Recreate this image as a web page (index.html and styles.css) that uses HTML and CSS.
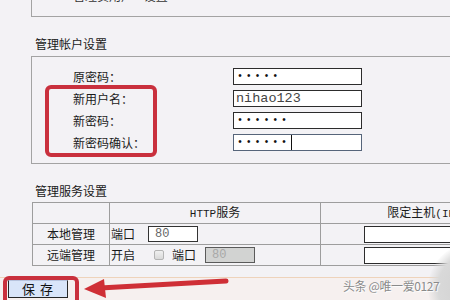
FILE: index.html
```html
<!DOCTYPE html>
<html lang="zh-CN">
<head>
<meta charset="utf-8">
<title>管理帐户设置</title>
<link rel="stylesheet" href="styles.css">
</head>
<body>
<div class="page">
  <div class="top-box"><div class="top-label">管理员用户 &nbsp; &nbsp;设置</div></div>

  <h2 class="section-title">管理帐户设置</h2>
  <div class="account-box">
    <div class="form-grid">
      <span class="label">原密码：</span><span class="field"><span class="dots">•••••</span></span>
      <span class="label">新用户名：</span><span class="field"><span class="plain">nihao123</span></span>
      <span class="label">新密码：</span><span class="field"><span class="dots">••••••</span></span>
      <span class="label">新密码确认：</span><span class="field focused"><span class="dots caret">••••••</span></span>
    </div>
  </div>

  <h2 class="section-title second">管理服务设置</h2>
  <table class="svc">
    <colgroup><col class="c1"><col class="c2"><col class="c3"></colgroup>
    <tr class="head"><td></td><td class="center"><span class="latin">HTTP</span>服务</td><td class="center">限定主机<span class="latin">(IP</span>地址<span class="latin">)</span></td></tr>
    <tr><td class="center">本地管理</td><td><div class="cell"><span>端口</span><span class="small-field port1">80</span></div></td><td><div class="cell"><span class="wide-field"></span></div></td></tr>
    <tr><td class="center">远端管理</td><td><div class="cell"><span>开启</span><span class="check"></span><span class="lbl2">端口</span><span class="small-field disabled">80</span></div></td><td><div class="cell"><span class="wide-field"></span></div></td></tr>
  </table>

  <div class="footer">
    <button class="save">保 存</button>
  </div>
</div>

<div class="mark mark-account"></div>
<div class="mark mark-save"></div>
<svg class="arrow" width="450" height="300" viewBox="0 0 450 300">
  <line x1="226" y1="281" x2="100" y2="288" stroke="#cf2f36" stroke-width="5" stroke-linecap="round"/>
  <polygon points="84,289 104,279 106,298" fill="#cf2f36"/>
</svg>
<div class="blob"></div>
<div class="watermark">头条 @唯一爱0127</div>
</body>
</html>
```

FILE: styles.css
```css
html, body {
  margin: 0;
  padding: 0;
}
body {
  width: 450px;
  height: 300px;
  overflow: hidden;
  position: relative;
  background: #f3f2f5;
  font-family: "Noto Sans CJK SC", "Liberation Sans", sans-serif;
  font-size: 12px;
  color: #1a1a1a;
}
.page {
  width: 600px;
}
.top-box {
  margin-left: 31px;
  height: 17px;
  box-sizing: border-box;
  border-left: 1px solid #a3a3a3;
  border-bottom: 1px solid #a3a3a3;
  overflow: hidden;
}
.top-label {
  margin-top: -11px;
  padding-left: 41px;
  line-height: 14px;
  color: #333;
}
.section-title {
  margin: 19px 0 4px 35px;
  font-size: 12px;
  font-weight: normal;
  line-height: 16px;
}
.section-title.second {
  margin-top: 19px;
  margin-bottom: 3px;
}
.account-box {
  margin-left: 31px;
  border-top: 1px solid #a3a3a3;
  border-left: 1px solid #a3a3a3;
  border-bottom: 1px solid #a3a3a3;
  padding: 11px 0 12px 41px;
}
.form-grid {
  display: grid;
  grid-template-columns: 160px 129px;
  row-gap: 5px;
  align-items: center;
}
.label {
  line-height: 17px;
}
.field {
  height: 17px;
  box-sizing: border-box;
  border: 1px solid #2c2c2c;
  background: #fff;
  display: flex;
  align-items: center;
  padding-left: 3px;
}
.field.focused {
  border-color: #56657a;
}
.dots {
  font-family: "Liberation Mono", monospace;
  font-size: 10px;
  letter-spacing: 2.8px;
  color: #111;
  line-height: 15px;
}
.dots.caret {
  border-right: 1px solid #111;
  padding-right: 1px;
}
.plain {
  font-family: "Liberation Mono", monospace;
  font-size: 13.5px;
  color: #444;
  line-height: 15px;
  margin-left: -1px;
}
.svc {
  margin-left: 32px;
  border-collapse: collapse;
  table-layout: fixed;
  width: 520px;
}
.svc col.c1 { width: 77px; }
.svc col.c2 { width: 211px; }
.svc col.c3 { width: 232px; }
.svc td {
  border: 1px solid #9d9d9d;
  height: 20px;
  padding: 0;
  font-size: 12px;
  line-height: 16px;
}
.latin {
  font-family: "Liberation Mono", monospace;
  font-size: 11px;
}
.center {
  text-align: center;
}
.cell {
  display: flex;
  align-items: center;
  padding-left: 1px;
}
.small-field {
  width: 50px;
  height: 16px;
  box-sizing: border-box;
  border: 1px solid #333;
  background: #fff;
  font-family: "Liberation Mono", monospace;
  font-size: 12px;
  line-height: 14px;
  padding-left: 6px;
  color: #666;
}
.port1 {
  margin-left: 13px;
}
.small-field.disabled {
  margin-left: 9px;
  background: #d2d3d2;
  border-color: #5a5a5a;
  color: #a8a8a8;
}
.check {
  width: 10px;
  height: 10px;
  box-sizing: border-box;
  margin-left: 19px;
  border: 1px solid #b4b4b4;
  border-radius: 2px;
  background: linear-gradient(#f0f0f0, #d9d9d9);
}
.lbl2 {
  margin-left: 8px;
}
.wide-field {
  margin-left: 42px;
  width: 120px;
  height: 17px;
  box-sizing: border-box;
  border: 1px solid #2c2c2c;
  background: #fff;
}
.footer {
  margin-top: 11px;
  border-top: 1px solid #eed3bb;
  background: #f6f0ef;
  padding: 2px 8px 10px;
}
.save {
  width: 60px;
  height: 18px;
  padding: 0;
  margin: 0;
  border: 1px solid #262626;
  border-top-color: #b7c3dd;
  background: #d9e5f9;
  font-family: "Noto Sans CJK SC", sans-serif;
  font-size: 13px;
  line-height: 16px;
  letter-spacing: 1px;
  color: #111;
  display: block;
}
.mark {
  position: absolute;
  border: 4px solid #c9303d;
  border-radius: 6px;
  box-sizing: border-box;
}
.mark-account {
  left: 45px;
  top: 85px;
  width: 112px;
  height: 72px;
}
.mark-save {
  left: 3px;
  top: 276px;
  width: 76px;
  height: 30px;
}
.arrow {
  position: absolute;
  left: 0;
  top: 0;
}
.blob {
  position: absolute;
  left: 428px;
  top: 243px;
  width: 90px;
  height: 90px;
  border-radius: 50%;
  background: radial-gradient(circle, #cfcfcf 0%, #d9d9d9 55%, rgba(220,220,220,0) 72%);
}
.watermark {
  position: absolute;
  left: 343px;
  top: 278px;
  font-size: 12px;
  line-height: 15px;
  color: #8a8a8a;
  text-shadow: 0 0 1px #fff, 1px 1px 1px #fff;
  letter-spacing: -0.4px;
}
```
